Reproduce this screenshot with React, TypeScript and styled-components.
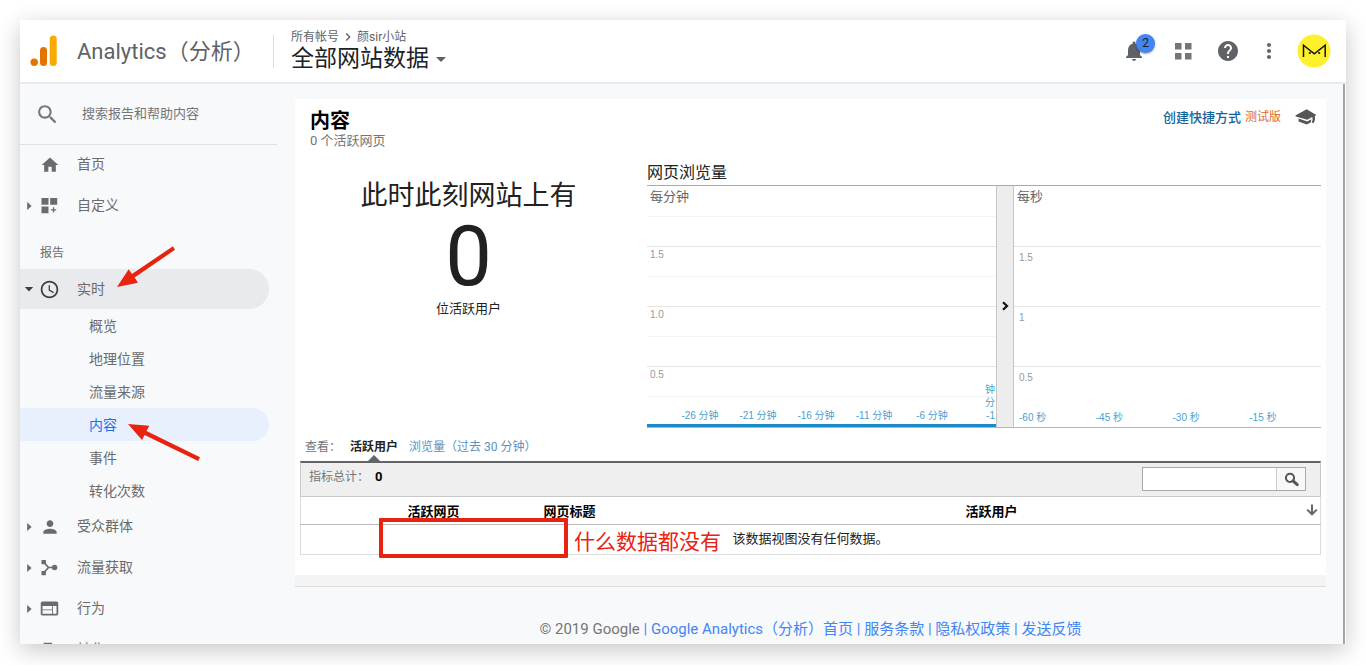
import React from 'react';
import styled, { createGlobalStyle, css } from 'styled-components';
import {
  MdArrowDropDown,
  MdChevronRight,
  MdFlag,
  MdHelp,
  MdHome,
  MdMoreVert,
  MdNotifications,
  MdPerson,
  MdSchedule,
  MdSearch,
  MdWeb,
} from 'react-icons/md';

const GlobalStyle = createGlobalStyle`
  *, *::before, *::after { box-sizing: border-box; }
  body {
    margin: 0;
    background: #fff;
    color: #212121;
    font-family: Roboto, "Noto Sans CJK SC", sans-serif;
    font-size: 13px;
  }
  a { color: inherit; text-decoration: none; }
  button, input { font: inherit; }
  button { border: 0; padding: 0; background: none; color: inherit; cursor: pointer; }
  svg { display: block; flex: none; }
  h1, h2, p { margin: 0; font-weight: 400; }
`;

const Stage = styled.div`
  height: 100vh;
  padding: 20px 20px 21px;
  overflow: hidden;
`;

const Window = styled.div`
  height: 100%;
  display: flex;
  flex-direction: column;
  overflow: hidden;
  background: #fff;
  box-shadow: 0 6px 22px rgba(0, 0, 0, 0.22);
`;

/* Top bar */

const TopBar = styled.header`
  flex: none;
  height: 64px;
  display: flex;
  align-items: center;
  padding: 0 15px 0 10px;
  border-bottom: 2px solid #e8eaed;
`;

const Product = styled.div`
  width: 244px;
  height: 33px;
  display: flex;
  align-items: center;
  gap: 20px;
  border-right: 1px solid #dadce0;
  color: #5f6368;
  font-size: 22px;
  white-space: nowrap;
`;

const ProductName = styled.span`
  padding-bottom: 4px;
`;

const Account = styled.div`
  flex: 1;
  padding-left: 17px;
`;

const Crumbs = styled.div`
  display: flex;
  align-items: center;
  gap: 1px;
  height: 16px;
  color: #5f6368;
  font-size: 12px;
  line-height: 16px;
`;

const ViewPicker = styled.button`
  display: flex;
  align-items: center;
  height: 28px;
  font-size: 23px;
  line-height: 28px;
  color: #202124;
  svg { color: #5f6368; }
`;

const Actions = styled.div`
  display: flex;
  align-items: center;
  color: #5f6368;
`;

const IconButton = styled.button<{ $gap: number }>`
  position: relative;
  width: 24px;
  height: 24px;
  margin-right: ${(p) => p.$gap}px;
  display: grid;
  place-items: center;
`;

const Badge = styled.span`
  position: absolute;
  left: 14px;
  top: -5px;
  width: 19px;
  height: 19px;
  border-radius: 50%;
  background: #4285f4;
  box-shadow: 0 1px 2px rgba(0, 0, 0, 0.4);
  color: #202124;
  font-size: 12px;
  line-height: 19px;
  text-align: center;
`;

/* Body */

const Body = styled.div`
  flex: 1;
  min-height: 0;
  display: flex;
  margin-right: 1px;
  border-right: 2px solid #a3a4a6;
  background: #f8f9fb;
  overflow: hidden;
`;

const Sidebar = styled.aside`
  flex: none;
  width: 275px;
`;

const SearchBar = styled.label`
  display: flex;
  align-items: center;
  gap: 22px;
  width: 257px;
  height: 61px;
  padding-left: 15px;
  border-bottom: 1px solid #dfe1e5;
  color: #757575;
`;

const SearchInput = styled.input`
  flex: 1;
  min-width: 0;
  border: 0;
  padding: 0 0 2px;
  background: transparent;
  outline: none;
  font-size: 13px;
  &::placeholder { color: #757575; opacity: 1; }
`;

const NavItem = styled.a<{ $open?: boolean }>`
  position: relative;
  display: grid;
  grid-template-columns: 15px 38px 1fr;
  align-items: center;
  width: 249px;
  height: 41px;
  padding: 0 0 2px 4px;
  border-radius: 0 21px 21px 0;
  color: #6b6b6b;
  font-size: 14px;
  line-height: 20px;
  ${(p) =>
    p.$open &&
    css`
      height: 40px;
      padding-bottom: 0;
      background: #e8eaed;
      svg { color: #3c4043; }
    `}
`;

const NavIcon = styled.span`
  width: 21px;
  display: grid;
  place-items: center;
`;

const NavLabel = styled.span`
  padding-bottom: 1px;
`;

const NavHeading = styled.div`
  height: 42px;
  padding: 17px 0 0 20px;
  color: #6b6b6b;
  font-size: 12px;
  line-height: 18px;
`;

const SubItem = styled.a<{ $current?: boolean }>`
  position: relative;
  display: flex;
  align-items: center;
  width: 249px;
  height: 33px;
  padding: 0 0 2px 69px;
  border-radius: 0 17px 17px 0;
  font-size: 14px;
  color: ${(p) => (p.$current ? '#1a73e8' : '#6b6b6b')};
  background: ${(p) => (p.$current ? '#e8f0fe' : 'transparent')};
`;

const PointerOverItem = styled.svg`
  position: absolute;
  left: 96px;
  top: -24px;
  pointer-events: none;
`;

const PointerUnderItem = styled(PointerOverItem)`
  left: 107px;
  top: 14px;
`;

/* Report */

const Main = styled.main`
  flex: 1;
  min-width: 0;
  padding: 15px 17px 0 0;
`;

const Card = styled.section`
  padding: 10px 5px 20px;
  background: #fff;
`;

const CardFoot = styled.div`
  height: 12px;
  background: #f4f4f4;
  border-bottom: 1px solid #dcdee1;
`;

const CardHead = styled.div`
  display: flex;
  justify-content: space-between;
  padding: 0 4px 0 10px;
`;

const Title = styled.h1`
  color: #000;
  font-size: 20px;
  font-weight: 700;
  line-height: 24px;
`;

const Subtitle = styled.p`
  color: #757575;
  line-height: 16px;
`;

const Shortcuts = styled.div`
  display: flex;
  height: 16px;
  gap: 4px;
  line-height: 16px;
`;

const ShortcutLink = styled.a`
  padding-top: 1px;
  color: #15639c;
  font-weight: 500;
`;

const Beta = styled.span`
  color: #dc6a2b;
  font-size: 12px;
  margin-right: 10px;
`;

const Overview = styled.div`
  display: grid;
  grid-template-columns: minmax(0, 1fr) minmax(0, 2fr);
  gap: 10px;
  padding-top: 11px;
`;

const NowBlock = styled.div`
  padding-top: 16px;
  text-align: center;
  color: #212121;
`;

const NowLabel = styled.h2`
  font-size: 27px;
  line-height: 40px;
`;

const NowCount = styled.p`
  font-size: 83px;
  line-height: 82px;
`;

const NowUnit = styled.p`
  font-size: 13px;
  line-height: 22px;
`;

const ChartTitle = styled.h2`
  height: 26px;
  font-size: 16px;
  line-height: 26px;
  border-bottom: 1px solid #a8a8a8;
`;

const Charts = styled.div`
  display: grid;
  grid-template-columns: minmax(0, 349fr) 18px minmax(0, 307fr);
  border-bottom: 1px solid #b5b5b5;
`;

const Plot = styled.div`
  display: flex;
  flex-direction: column;
`;

const Band = styled.div<{ $halves?: boolean }>`
  height: 60px;
  display: flex;
  flex-direction: column;
  justify-content: space-between;
  border-top: 1px solid #e6e6e6;
  background: ${(p) =>
    p.$halves ? 'linear-gradient(#f4f4f4, #f4f4f4) 0 29px / 100% 1px no-repeat' : 'none'};
  &:first-child { border-top-color: transparent; }
  &:last-child { height: 61px; }
`;

const PlotName = styled.div`
  padding-left: 3px;
  color: #666;
  font-size: 13px;
  line-height: 20px;
`;

const Tick = styled.div<{ $inset?: boolean }>`
  padding: ${(p) => (p.$inset ? '3px 0 0 5px' : '0 0 0 3px')};
  color: #999;
  font: 10px/16px "Liberation Sans", sans-serif;
`;

const Axis = styled.div`
  color: #4a9fd0;
  font: 10px/13px "Liberation Sans", "Noto Sans CJK SC", sans-serif;
`;

const MinuteAxis = styled(Axis)`
  display: grid;
  grid-template-columns: repeat(5, 58fr) 35fr;
  align-items: end;
  padding: 0 0 2px 24px;
  border-bottom: 3px solid #1b8ac7;
  text-align: center;
`;

const StackedLabel = styled.span`
  display: flex;
  flex-direction: column-reverse;
  align-items: flex-end;
  padding-right: 1px;
`;

const SecondAxis = styled(Axis)`
  display: grid;
  grid-template-columns: repeat(4, 1fr);
  padding: 0 0 3px 5px;
  margin-right: -5px;
`;

const Splitter = styled.button`
  display: grid;
  place-items: center;
  background: #ededed;
  border: solid #c6c6c6;
  border-width: 0 1px;
`;

const Tabs = styled.div`
  display: flex;
  height: 33px;
  padding: 8px 0 0 5px;
  font-size: 12px;
  line-height: 22px;
  color: #757575;
`;

const Tab = styled.a<{ $on?: boolean }>`
  position: relative;
  margin-left: ${(p) => (p.$on ? '9px' : '11px')};
  font-weight: ${(p) => (p.$on ? 700 : 400)};
  color: ${(p) => (p.$on ? '#222' : '#5b93bf')};
  ${(p) =>
    p.$on &&
    css`
      &::after {
        content: '';
        position: absolute;
        left: 50%;
        bottom: 0;
        margin-left: -6px;
        border: solid transparent;
        border-width: 0 6px 6px;
        border-bottom-color: #636466;
      }
    `}
`;

const Toolbar = styled.div`
  display: flex;
  justify-content: space-between;
  height: 36px;
  padding: 4px 14px 0 8px;
  border: 1px solid #c9c9c9;
  border-top: 2px solid #636466;
  background: #efefef;
`;

const Total = styled.div`
  display: flex;
  gap: 6px;
  color: #757575;
  font-size: 12px;
  line-height: 20px;
  strong { color: #000; font-size: 13px; }
`;

const Filter = styled.form`
  display: flex;
  height: 24px;
  border: 1px solid #a9a9a9;
  background: #fff;
`;

const FilterInput = styled.input`
  width: 133px;
  border: 0;
  padding: 0 4px;
  outline: none;
`;

const FilterButton = styled.button`
  width: 29px;
  display: grid;
  place-items: center;
  border-left: 1px solid #ccc;
  background: #f8f8f8;
`;

const Table = styled.table`
  width: 100%;
  table-layout: fixed;
  border-collapse: collapse;
  border: solid #dcdcdc;
  border-width: 0 1px 1px;
`;

const HeadCell = styled.th<{ $width?: string }>`
  width: ${(p) => p.$width ?? 'auto'};
  height: 27px;
  padding: 0;
  border-bottom: 1px solid #bdbdbd;
  color: #000;
  font-weight: 700;
  text-align: left;
`;

const SortButton = styled.button`
  display: block;
  margin-left: auto;
  padding-right: 2px;
`;

const EmptyCell = styled.td`
  position: relative;
  height: 30px;
  padding: 0 0 3px;
  text-align: center;
`;

const Highlight = styled.span`
  position: absolute;
  left: 78px;
  top: -7px;
  width: 189px;
  height: 40px;
  border: 4px solid #e8230f;
  border-radius: 1px;
`;

const Remark = styled.span`
  position: absolute;
  left: 273px;
  top: 2px;
  color: #e8230f;
  font-size: 21px;
  line-height: 30px;
`;

const Footer = styled.footer`
  padding-top: 32px;
  color: #757575;
  font-size: 15px;
  line-height: 20px;
  text-align: center;
  nav { display: inline; color: #4285f4; }
`;

/* Drawings */

const Logo = () => (
  <svg width="27" height="32" viewBox="0 0 27 32" aria-hidden="true">
    <circle cx="4.2" cy="27.3" r="3.7" fill="#e37400" />
    <rect x="10" y="12" width="7" height="19" rx="3.5" fill="#e37400" />
    <rect x="19.7" y="0.6" width="7" height="30.4" rx="3.5" fill="#f9ab00" />
  </svg>
);

const AppsIcon = () => (
  <svg width="18" height="18" viewBox="0 0 18 18" fill="#757575">
    <path d="M1 1h6.5v6.5H1zM11 1h6.5v6.5H11zM1 11h6.5v6.5H1zM11 11h6.5v6.5H11z" />
  </svg>
);

const Avatar = () => (
  <svg width="34" height="34" viewBox="0 0 34 34" role="img" aria-label="avatar">
    <circle cx="17" cy="17" r="16.5" fill="#fff02d" />
    <path d="M6.5 23V11.2L17.3 19.8 28.2 11.2V23" fill="none" stroke="#111" strokeWidth="1.5" />
    <circle cx="12.8" cy="19" r="1.1" fill="#111" />
    <circle cx="22.2" cy="19" r="1.1" fill="#111" />
  </svg>
);

const Caret = ({ open }: { open?: boolean }) => (
  <svg width="10" height="10" viewBox="0 0 10 10" fill="currentColor">
    <path d={open ? 'M.8 3h8.4L5 7.4z' : 'M3.2 1v8l4.4-4z'} />
  </svg>
);

const CustomizeIcon = () => (
  <svg width="17" height="17" viewBox="0 0 17 17" fill="currentColor">
    <path d="M.5 1h7v6.8h-7zM9.2 1h7v6.8h-7zM.5 9.5h7v6.7h-7zM11.9 10.3h1.3v2h2v1.3h-2v2h-1.3v-2h-2v-1.3h2z" />
  </svg>
);

const AcquisitionIcon = () => (
  <svg width="17" height="17" viewBox="0 0 17 17">
    <path d="M2.5 3 7.5 8.5 2.5 14M7.5 8.5h6" fill="none" stroke="currentColor" strokeWidth="1.7" />
    <path d="M.5 1h4.4v4.2H.5zM.5 12h4.4v4.2H.5z" fill="currentColor" />
    <circle cx="13.6" cy="8.5" r="2.7" fill="currentColor" />
  </svg>
);

const CapIcon = () => (
  <svg width="22" height="16" viewBox="0 0 22 16" fill="#555">
    <path d="M.3 6.4 11.7.2 21.3 6l-1.5 1.2.3 3.6-1.6 3.4-1.7-.6.9-3.2-.5-2.4-4.9 2.8L.9 7.4z" />
    <path d="M3.6 9.4l8.7 3 3.9-2.2-.2 3-4.2 2.4-8.2-3.2z" />
  </svg>
);

const SplitArrow = () => (
  <svg width="8" height="12" viewBox="0 0 8 12" fill="none" stroke="#111" strokeWidth="2.2">
    <path d="M2 1.2 6 5l-4 3.8" />
  </svg>
);

const FilterIcon = () => (
  <svg width="15" height="15" viewBox="0 0 15 15" fill="none" stroke="#555">
    <circle cx="6" cy="5.8" r="4.1" strokeWidth="2" />
    <path d="M9 8.8l4.2 3.8" strokeWidth="3" strokeLinecap="round" />
  </svg>
);

const SortIcon = () => (
  <svg width="12" height="12" viewBox="0 0 12 12" fill="none" stroke="#666" strokeWidth="2">
    <path d="M6 .5v9.8M1.2 5.6 6 10.3l4.8-4.7" />
  </svg>
);

const minuteMarks = ['-26 分钟', '-21 分钟', '-16 分钟', '-11 分钟', '-6 分钟'];
const secondMarks = ['-60 秒', '-45 秒', '-30 秒', '-15 秒'];
const realtimePages = ['概览', '地理位置', '流量来源', '内容', '事件', '转化次数'];
const footerLinks = ['Google Analytics（分析）首页', '服务条款', '隐私权政策', '发送反馈'];

const sections = [
  { label: '受众群体', icon: <MdPerson size={20} /> },
  { label: '流量获取', icon: <AcquisitionIcon /> },
  { label: '行为', icon: <MdWeb size={21} /> },
  { label: '转化', icon: <MdFlag size={22} /> },
];

function Header() {
  return (
    <TopBar>
      <Product>
        <Logo />
        <ProductName>Analytics（分析）</ProductName>
      </Product>
      <Account>
        <Crumbs>
          <a href="#accounts">所有帐号</a>
          <MdChevronRight size={16} />
          <a href="#site">颜sir小站</a>
        </Crumbs>
        <ViewPicker type="button">
          全部网站数据
          <MdArrowDropDown size={24} />
        </ViewPicker>
      </Account>
      <Actions>
        <IconButton type="button" aria-label="通知" $gap={25}>
          <MdNotifications size={24} />
          <Badge>2</Badge>
        </IconButton>
        <IconButton type="button" aria-label="应用" $gap={21}>
          <AppsIcon />
        </IconButton>
        <IconButton type="button" aria-label="帮助" $gap={17}>
          <MdHelp size={24} />
        </IconButton>
        <IconButton type="button" aria-label="更多" $gap={16}>
          <MdMoreVert size={24} />
        </IconButton>
        <Avatar />
      </Actions>
    </TopBar>
  );
}

function Navigation() {
  return (
    <Sidebar>
      <SearchBar>
        <MdSearch size={25} />
        <SearchInput placeholder="搜索报告和帮助内容" aria-label="搜索报告和帮助内容" />
      </SearchBar>
      <nav>
        <NavItem href="#home">
          <span />
          <NavIcon><MdHome size={20} /></NavIcon>
          <NavLabel>首页</NavLabel>
        </NavItem>
        <NavItem href="#custom">
          <Caret />
          <NavIcon><CustomizeIcon /></NavIcon>
          <NavLabel>自定义</NavLabel>
        </NavItem>
        <NavHeading>报告</NavHeading>
        <NavItem href="#realtime" $open>
          <Caret open />
          <NavIcon><MdSchedule size={21} /></NavIcon>
          <NavLabel>实时</NavLabel>
          <PointerOverItem width="60" height="42" viewBox="0 0 60 42">
            <path d="M1 42 12.7 24.3l3.3 4.6L57 1.2 59 4.8 18.6 32.4 22 37.7z" fill="#e8230f" />
          </PointerOverItem>
        </NavItem>
        {realtimePages.map((page) => (
          <SubItem key={page} href="#report" $current={page === '内容'}>
            {page}
            {page === '内容' && (
              <PointerUnderItem width="74" height="40" viewBox="0 0 74 40">
                <path d="M1 2 22.3 3.7l-2.8 5.4L73 35.2l-1.8 3.9L17.6 13l-2.6 5z" fill="#e8230f" />
              </PointerUnderItem>
            )}
          </SubItem>
        ))}
        {sections.map(({ label, icon }) => (
          <NavItem key={label} href="#section">
            <Caret />
            <NavIcon>{icon}</NavIcon>
            <NavLabel>{label}</NavLabel>
          </NavItem>
        ))}
      </nav>
    </Sidebar>
  );
}

function PageviewCharts() {
  return (
    <div>
      <ChartTitle>网页浏览量</ChartTitle>
      <Charts>
        <Plot>
          <Band $halves><PlotName>每分钟</PlotName></Band>
          <Band $halves><Tick>1.5</Tick></Band>
          <Band $halves><Tick>1.0</Tick></Band>
          <Band $halves>
            <Tick>0.5</Tick>
            <MinuteAxis>
              {minuteMarks.map((mark) => <span key={mark}>{mark}</span>)}
              <StackedLabel>
                <span>-1</span>
                <span>分</span>
                <span>钟</span>
              </StackedLabel>
            </MinuteAxis>
          </Band>
        </Plot>
        <Splitter type="button" aria-label="展开"><SplitArrow /></Splitter>
        <Plot>
          <Band><PlotName>每秒</PlotName></Band>
          <Band><Tick $inset>1.5</Tick></Band>
          <Band><Tick $inset>1</Tick></Band>
          <Band>
            <Tick $inset>0.5</Tick>
            <SecondAxis>
              {secondMarks.map((mark) => <span key={mark}>{mark}</span>)}
            </SecondAxis>
          </Band>
        </Plot>
      </Charts>
    </div>
  );
}

function PagesTable() {
  return (
    <Table>
      <thead>
        <tr>
          <HeadCell $width="107px" aria-label="序号" />
          <HeadCell $width="136px">活跃网页</HeadCell>
          <HeadCell>网页标题</HeadCell>
          <HeadCell $width="331px">活跃用户</HeadCell>
          <HeadCell $width="24px">
            <SortButton type="button" aria-label="排序"><SortIcon /></SortButton>
          </HeadCell>
        </tr>
      </thead>
      <tbody>
        <tr>
          <EmptyCell colSpan={5}>
            <Highlight />
            <Remark>什么数据都没有</Remark>
            该数据视图没有任何数据。
          </EmptyCell>
        </tr>
      </tbody>
    </Table>
  );
}

export default function App() {
  return (
    <Stage lang="zh-CN">
      <GlobalStyle />
      <Window>
        <Header />
        <Body>
          <Navigation />
          <Main>
            <Card>
              <CardHead>
                <div>
                  <Title>内容</Title>
                  <Subtitle>0 个活跃网页</Subtitle>
                </div>
                <Shortcuts>
                  <ShortcutLink href="#shortcut">创建快捷方式</ShortcutLink>
                  <Beta>测试版</Beta>
                  <CapIcon />
                </Shortcuts>
              </CardHead>
              <Overview>
                <NowBlock>
                  <NowLabel>此时此刻网站上有</NowLabel>
                  <NowCount>0</NowCount>
                  <NowUnit>位活跃用户</NowUnit>
                </NowBlock>
                <PageviewCharts />
              </Overview>
              <Tabs>
                查看：
                <Tab href="#users" $on>活跃用户</Tab>
                <Tab href="#views">浏览量（过去 30 分钟）</Tab>
              </Tabs>
              <Toolbar>
                <Total>
                  指标总计：<strong>0</strong>
                </Total>
                <Filter>
                  <FilterInput aria-label="过滤网页" />
                  <FilterButton type="button" aria-label="搜索"><FilterIcon /></FilterButton>
                </Filter>
              </Toolbar>
              <PagesTable />
            </Card>
            <CardFoot />
            <Footer>
              © 2019 Google{' '}
              <nav>
                {footerLinks.map((link) => (
                  <React.Fragment key={link}>
                    {' | '}
                    <a href="#footer">{link}</a>
                  </React.Fragment>
                ))}
              </nav>
            </Footer>
          </Main>
        </Body>
      </Window>
    </Stage>
  );
}
